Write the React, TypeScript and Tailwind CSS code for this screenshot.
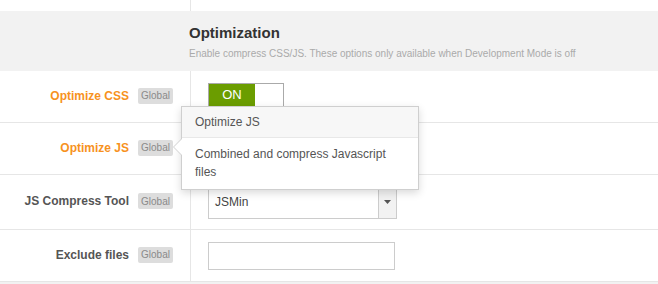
import { ReactNode } from 'react';

const font = { fontFamily: '"Liberation Sans", Arial, Helvetica, sans-serif' };

function Badge() {
  return (
    <span className="ml-[9px] inline-flex h-4 w-[35px] items-center justify-center rounded-[2px] bg-[#dddddd] text-[10px] text-[#8a8a8a]">
      Global
    </span>
  );
}

function Row({ label, orange, height, children }: { label: string; orange?: boolean; height: string; children: ReactNode }) {
  return (
    <div className={`flex ${height} border-b border-[#e6e6e6]`}>
      <div className="flex w-[191px] shrink-0 items-center justify-end border-r border-[#e6e6e6] pb-[2px] pr-[17px]">
        <span className={`text-[12px] font-bold ${orange ? 'text-[#f7921e]' : 'text-[#555555]'}`}>{label}</span>
        <Badge />
      </div>
      <div className="flex flex-1 items-center pl-[17px]">{children}</div>
    </div>
  );
}

export default function App() {
  return (
    <div className="relative h-[284px] w-[658px] overflow-hidden bg-white" style={font}>
      <div className="h-[11px] w-[191px] border-r border-[#e6e6e6]" />
      <div className="flex h-[60px] flex-col bg-[#f2f2f2] pl-[189px] pt-[13px]">
        <h2 className="text-[15px] font-bold leading-[18px] text-[#333333]">Optimization</h2>
        <p className="mt-[6px] text-[10px] leading-[12px] text-[#aaaaaa]">
          Enable compress CSS/JS. These options only available when Development Mode is off
        </p>
      </div>

      <Row label="Optimize CSS" orange height="h-[52px]">
        <div className="-mt-[3px] flex h-[25px] w-[76px] border border-[#aaaaaa] bg-white">
          <div className="flex w-[46px] items-center justify-center bg-[#6b9d00] text-[13px] text-white">ON</div>
        </div>
      </Row>
      <Row label="Optimize JS" orange height="h-[52px]">
        <div />
      </Row>
      <Row label="JS Compress Tool" height="h-[55px]">
        <div className="flex h-[33px] w-[189px] border border-[#cccccc] bg-white">
          <span className="flex flex-1 items-center pl-[6px] text-[12px] text-[#444444]">JSMin</span>
          <span className="flex w-[18px] items-center justify-center border-l border-[#cccccc] bg-[#f2f2f2]">
            <svg width="7" height="4" viewBox="0 0 7 4">
              <path d="M0 0h7L3.5 4z" fill="#555555" />
            </svg>
          </span>
        </div>
      </Row>
      <Row label="Exclude files" height="h-[52px]">
        <div className="mt-[1px] h-[28px] w-[187px] border border-[#cccccc] bg-white" />
      </Row>
      <div className="h-full bg-[#f2f2f2]" />

      <div className="absolute left-[181px] top-[106px] w-[238px] border border-[#cfcfcf] bg-white shadow-[0_3px_8px_rgba(0,0,0,0.15)]">
        <div className="flex h-[31px] items-center border-b border-[#e8e8e8] bg-[#f7f7f7] pl-[13px] text-[12px] text-[#555555]">
          Optimize JS
        </div>
        <div className="px-[13px] pb-[8px] pt-[7px] text-[12px] leading-[18px] text-[#555555]">
          Combined and compress Javascript files
        </div>
        <div className="absolute left-[-9px] top-[32px] h-0 w-0 border-y-[8px] border-r-[8px] border-y-transparent border-r-[#cfcfcf]" />
        <div className="absolute left-[-8px] top-[32px] h-0 w-0 border-y-[8px] border-r-[8px] border-y-transparent border-r-white" />
      </div>
    </div>
  );
}
